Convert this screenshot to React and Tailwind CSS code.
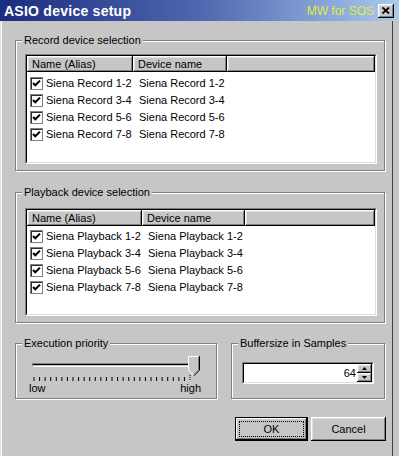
import React from "react";

const raised =
  "shadow-[inset_-1px_-1px_0_#000,inset_1px_1px_0_#fff,inset_-2px_-2px_0_#808080,inset_2px_2px_0_#dfdfdf]";

function Check() {
  return (
    <div className="w-[13px] h-[13px] border border-[#808080] shadow-[inset_1px_1px_0_#303030] bg-white flex items-center justify-center shrink-0">
      <svg width="11" height="11" viewBox="0 0 11 11">
        <path d="M2 5 L4.3 7.3 L9 2.6" fill="none" stroke="#000" strokeWidth="2" />
      </svg>
    </div>
  );
}

function Group({ label, className, children }) {
  return (
    <fieldset
      className={
        "border border-[#808080] shadow-[inset_1px_1px_0_#fff,1px_1px_0_#fff] m-0 p-0 min-w-0 " +
        className
      }
    >
      <legend className="ml-[6px] px-[2px] leading-[14px] h-[14px] bg-[#c6c6c6] text-[11px] text-black">
        {label}
      </legend>
      {children}
    </fieldset>
  );
}

function ListView({ c1, c2, rows, heightClass, ptClass }) {
  return (
    <div
      className={
        "w-[352px] border border-t-[#808080] border-l-[#808080] border-r-white border-b-white " +
        heightClass
      }
    >
      <div className="h-full border border-t-black border-l-black border-r-[#dfdfdf] border-b-[#dfdfdf] bg-white flex flex-col overflow-hidden">
        <div className="flex h-[16px] shrink-0 bg-[#c6c6c6] text-[11px]">
          <div className={"h-full pl-[5px] flex items-center " + raised + " " + c1}>
            Name (Alias)
          </div>
          <div className={"h-full pl-[5px] flex items-center " + raised + " " + c2}>
            Device name
          </div>
          <div className={"h-full flex-1 " + raised}></div>
        </div>
        <div className={"flex flex-col " + ptClass}>
          {rows.map((r) => (
            <div key={r} className="flex items-center h-[17px] text-[11px]">
              <div className={"flex items-center gap-[3px] pl-[3px] " + c1}>
                <Check />
                <span className="whitespace-nowrap">{r}</span>
              </div>
              <div className="pl-[6px] whitespace-nowrap">{r}</div>
            </div>
          ))}
        </div>
      </div>
    </div>
  );
}

function Ticks() {
  const ticks = [];
  for (let i = 0; i <= 28; i++) {
    const x = 5 + (i * 156) / 28;
    ticks.push(
      <line
        key={i}
        x1={x}
        x2={x}
        y1={i === 28 ? 0 : 2}
        y2={6}
        stroke="#000"
        strokeWidth="1"
        strokeDasharray={i === 28 ? "1 1" : "none"}
      />
    );
  }
  return (
    <svg width="170" height="7" viewBox="0 0 170 7" className="block">
      {ticks}
    </svg>
  );
}

export default function App() {
  return (
    <div className="w-[399px] h-[456px] bg-[#c6c6c6] font-['Liberation_Sans',Arial,sans-serif] text-black overflow-hidden relative shadow-[inset_1px_0_0_#dedede,inset_2px_0_0_#fff,inset_-6px_0_0_#c6c6c6,inset_-7px_0_0_#404040]">
      {/* Title bar */}
      <div className="h-[21px] flex items-center pl-[4px] pr-[5px] bg-gradient-to-r from-[#1c2c80] via-[#5066ae] to-[#aacbf0]">
        <span className="text-white font-bold text-[14px] tracking-[0.25px] leading-none">
          ASIO device setup
        </span>
        <span className="ml-auto mr-[4px] text-[12px] text-[#e4ea3c] leading-none">
          MW for SOS
        </span>
        <div
          className={
            "w-[16px] h-[14px] bg-[#c6c6c6] flex items-center justify-center " + raised
          }
        >
          <svg width="8" height="7" viewBox="0 0 8 7">
            <path d="M0.5 0.5 L7 6.5 M7 0.5 L0.5 6.5" stroke="#000" strokeWidth="1.8" />
          </svg>
        </div>
      </div>

      {/* Body */}
      <div className="pl-[15px] pr-[14px] flex flex-col">
        <Group label="Record device selection" className="mt-[12px] w-[370px]">
          <div className="pl-[9px] pt-[7px] pb-[6px]">
            <ListView
              c1="w-[106px]"
              c2="w-[94px]"
              heightClass="h-[110px]"
              ptClass="pt-[3px]"
              rows={[
                "Siena Record 1-2",
                "Siena Record 3-4",
                "Siena Record 5-6",
                "Siena Record 7-8",
              ]}
            />
          </div>
        </Group>

        <Group label="Playback device selection" className="mt-[14px] w-[370px]">
          <div className="pl-[9px] pt-[9px] pb-[6px]">
            <ListView
              c1="w-[115px]"
              c2="w-[103px]"
              heightClass="h-[108px]"
              ptClass="pt-[2px]"
              rows={[
                "Siena Playback 1-2",
                "Siena Playback 3-4",
                "Siena Playback 5-6",
                "Siena Playback 7-8",
              ]}
            />
          </div>
        </Group>

        <div className="mt-[13px] flex gap-[14px]">
          <Group label="Execution priority" className="w-[202px]">
            <div className="h-[48px] pl-[14px] pt-[6px] flex flex-col">
              <div className="relative w-[170px] h-[19px] pl-[2px]">
                <div className="mt-[7px] w-[163px] h-[4px] border border-t-[#808080] border-l-[#808080] border-r-white border-b-white bg-[#000] shadow-[inset_0_-1px_0_#c6c6c6]"></div>
                <svg
                  width="12"
                  height="20"
                  viewBox="0 0 12 20"
                  className="absolute left-[158px] top-0"
                >
                  <path d="M0.5 0.5 H11 V14 L5.75 19.3 L0.5 14 Z" fill="#c6c6c6" />
                  <path d="M0.5 14 V0.5 H10.5" fill="none" stroke="#fff" />
                  <path d="M11.5 0 V14.2 L5.75 19.8" fill="none" stroke="#000" />
                  <path d="M10.5 1 V13.8 L5.75 18.5" fill="none" stroke="#808080" />
                  <path d="M0.5 14 L5.2 18.7" fill="none" stroke="#fff" />
                </svg>
              </div>
              <div className="-ml-[1px]">
                <Ticks />
              </div>
              <div className="w-[172px] flex justify-between text-[11px] leading-[12px] -ml-[1px]">
                <span>low</span>
                <span>high</span>
              </div>
            </div>
          </Group>

          <Group label="Buffersize in Samples" className="w-[154px]">
            <div className="h-[48px] pl-[10px] pt-[12px]">
              <div className="w-[132px] h-[22px] border border-t-[#808080] border-l-[#808080] border-r-white border-b-white">
                <div className="h-full border border-t-black border-l-black border-r-[#dfdfdf] border-b-[#dfdfdf] bg-white flex">
                  <div className="flex-1 flex items-center justify-end pr-[1px] text-[11px]">64</div>
                  <div className="w-[15px] flex flex-col">
                    <div className={"h-[9px] bg-[#c6c6c6] flex items-center justify-center " + raised}>
                      <svg width="5" height="3" viewBox="0 0 5 3">
                        <path d="M2.5 0 L5 3 H0 Z" fill="#000" />
                      </svg>
                    </div>
                    <div className={"h-[9px] bg-[#c6c6c6] flex items-center justify-center " + raised}>
                      <svg width="5" height="3" viewBox="0 0 5 3">
                        <path d="M0 0 H5 L2.5 3 Z" fill="#000" />
                      </svg>
                    </div>
                  </div>
                </div>
              </div>
            </div>
          </Group>
        </div>

        <div className="mt-[18px] flex justify-end gap-[3px] -mr-[1px]">
          <div className="w-[73px] h-[24px] border border-black bg-[#c6c6c6] shadow-[inset_-1px_-1px_0_#000,inset_1px_1px_0_#fff,inset_-2px_-2px_0_#808080]">
            <div className="m-[3px] h-[16px] border border-dotted border-black flex items-center justify-center text-[11px]">
              OK
            </div>
          </div>
          <div className={"w-[75px] h-[24px] bg-[#c6c6c6] flex items-center justify-center text-[11px] " + raised}>
            Cancel
          </div>
        </div>
      </div>
    </div>
  );
}
